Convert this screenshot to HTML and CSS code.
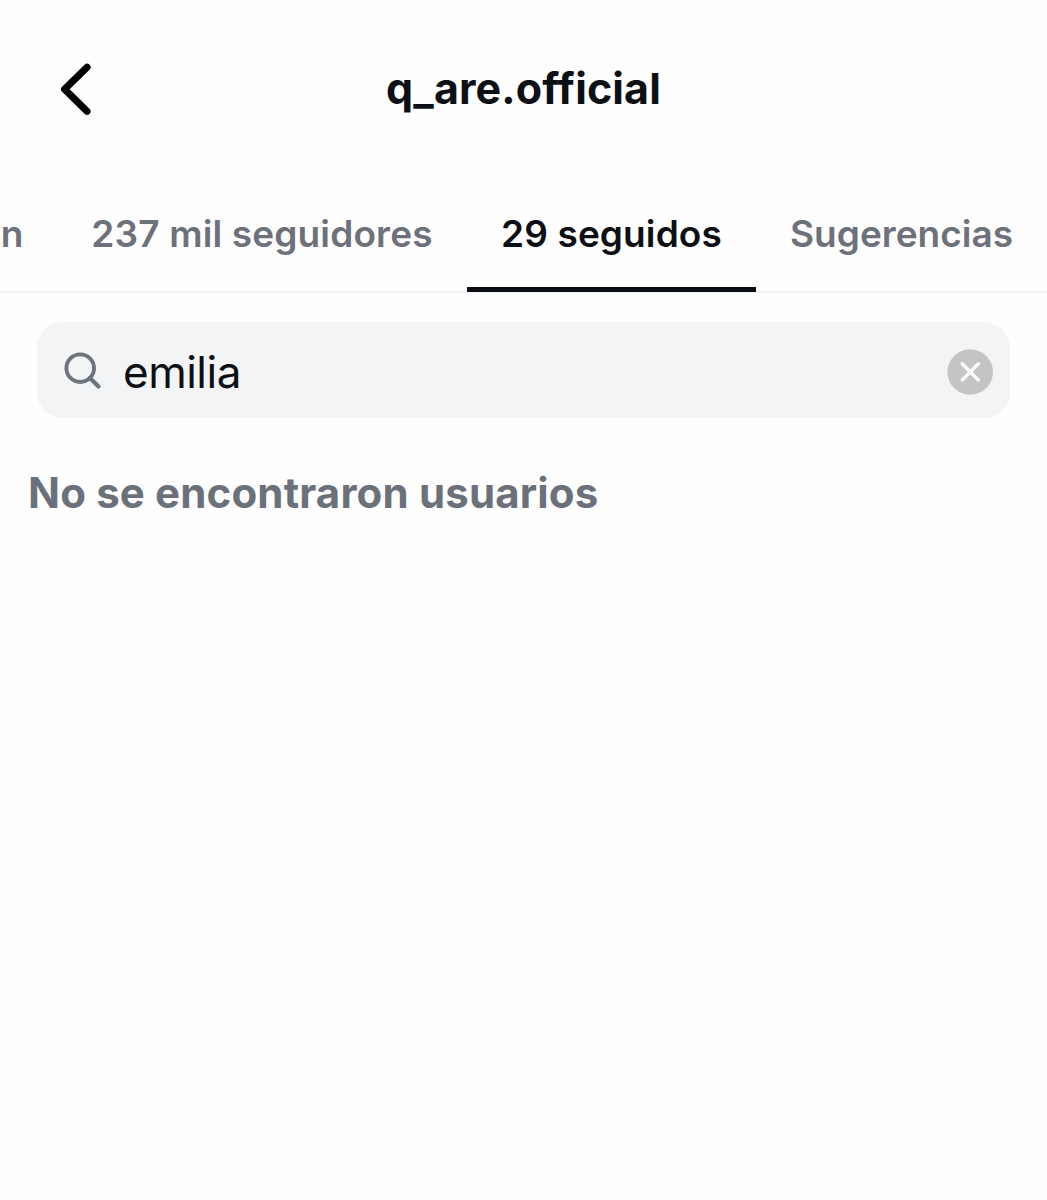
FILE: index.html
```html
<!DOCTYPE html>
<html lang="es">
<head>
  <meta charset="UTF-8">
  <meta name="viewport" content="width=device-width, initial-scale=1.0">
  <title>q_are.official</title>
  <link rel="stylesheet" href="styles.css">
</head>
<body>
  <header class="header">
    <button class="back-btn" aria-label="Atrás">
      <svg width="32" height="54" viewBox="0 0 32 54">
        <path d="M27 5.3 4.6 27.3 27 49.3" fill="none" stroke="#000" stroke-width="7.2" stroke-linecap="round" stroke-linejoin="round"/>
      </svg>
    </button>
    <h1 class="username"><span>q_are.official</span></h1>
  </header>
  <nav class="tabs">
    <a class="tab tab-cut"><span>n</span></a>
    <a class="tab tab-followers"><span>237 mil seguidores</span></a>
    <a class="tab tab-following active"><span>29 seguidos</span></a>
    <a class="tab tab-suggested"><span>Sugerencias</span></a>
  </nav>
  <main>
    <div class="search-box">
      <svg class="search-icon" width="40" height="40" viewBox="0 0 40 40">
        <circle cx="16.2" cy="18.2" r="13.8" fill="none" stroke="#6c757d" stroke-width="3.9"/>
        <path d="M26 28 34.5 36.5" stroke="#6c757d" stroke-width="4.2" stroke-linecap="round"/>
      </svg>
      <span class="search-text">emilia</span>
      <button class="clear-btn" aria-label="Borrar">
        <svg width="46" height="46" viewBox="0 0 46 46">
          <circle cx="23.2" cy="23" r="22.8" fill="#c3c4c5"/>
          <path d="M15.2 14.8 31.4 31M31.4 14.8 15.2 31" stroke="#fafafa" stroke-width="3.4" stroke-linecap="round"/>
        </svg>
      </button>
    </div>
    <p class="empty-message"><span>No se encontraron usuarios</span></p>
  </main>
</body>
</html>
```

FILE: styles.css
```css
* {
  box-sizing: border-box;
}
body {
  margin: 0;
  background-color: #fefefe;
  color: #0c1014;
  font-family: Inter, "Liberation Sans", sans-serif;
  overflow-x: hidden;
}
button {
  display: flex;
  padding: 0;
  border: none;
  background: none;
}
.header {
  display: grid;
  grid-template-columns: 32px 1fr 32px;
  align-items: center;
  height: 178px;
  padding: 0 60px;
}
.username {
  margin: 0 0 3px;
  font-size: 43px;
  font-weight: 700;
  letter-spacing: 0.1px;
  text-align: center;
}
.tabs {
  display: flex;
  justify-content: flex-end;
  height: 115px;
  border-bottom: 2px solid #f0f1f3;
}
.tab {
  display: flex;
  flex-shrink: 0;
  justify-content: center;
  height: 114px;
  padding-top: 33px;
  color: #6c717a;
  font-size: 37px;
  font-weight: 600;
  line-height: 46px;
  white-space: nowrap;
}
.tab-cut {
  width: 90px;
}
.tab-followers {
  width: 410px;
  letter-spacing: 0.15px;
}
.tab-following {
  width: 289px;
  letter-spacing: 0.1px;
}
.tab-suggested {
  width: 291px;
}
.tab.active {
  color: #0c1014;
  border-bottom: 5px solid #0c1014;
}
.search-box {
  display: flex;
  align-items: center;
  height: 96px;
  margin: 29px 37px 0;
  padding: 0 17px 0 27px;
  border-radius: 26px;
  background-color: #f3f4f6;
}
.search-text {
  flex: 1;
  margin-top: 3px;
  margin-left: 19px;
  font-size: 44px;
  letter-spacing: -0.5px;
}
.clear-btn {
  margin-top: 4px;
}
.empty-message {
  margin: 49px 28px 0;
  color: #6a717a;
  font-size: 42px;
  font-weight: 700;
  letter-spacing: 0.15px;
  line-height: 52px;
}
```
